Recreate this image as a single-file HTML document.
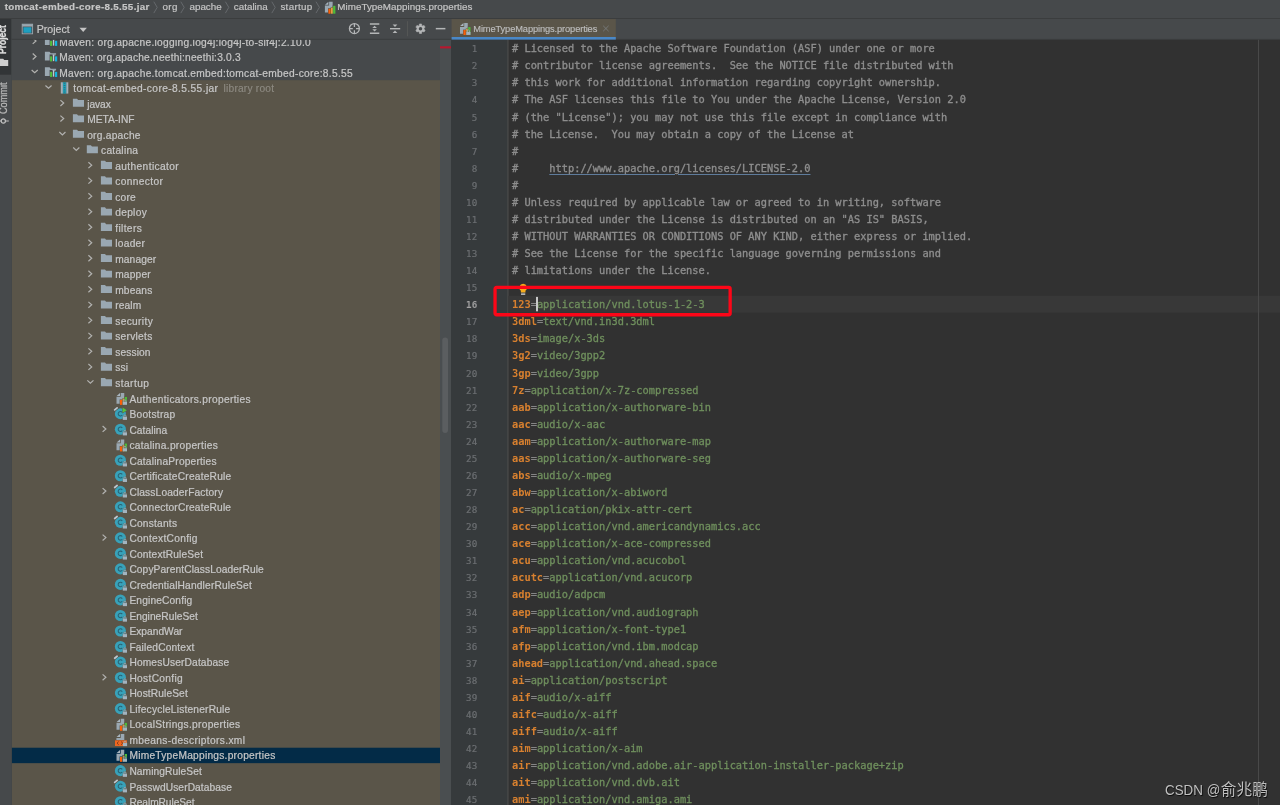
<!DOCTYPE html>
<html lang="en"><head><meta charset="utf-8"><title>MimeTypeMappings.properties</title>
<style>
html,body{margin:0;padding:0;width:1280px;height:805px;overflow:hidden;background:#46494b}
body{position:relative;font-family:"Liberation Sans", sans-serif;color:#bbb}
div,span,svg{position:absolute;white-space:pre}
.t{font-size:10.2px;line-height:15.52px;height:15.52px;color:#c6c6c6;-webkit-text-stroke:0.22px #c6c6c6}
.bc{font-size:9.8px;line-height:18px;top:-1.8px;height:18px;color:#c6c6c6;-webkit-text-stroke:0.18px #c6c6c6}
.ln{font-family:"DejaVu Sans Mono", "Liberation Mono", monospace;font-size:9.2px;line-height:17.07px;height:17.07px;width:26.2px;left:451px;text-align:right;color:#6c6f72;-webkit-text-stroke:0.2px #6c6f72}
.c{font-family:"DejaVu Sans Mono", "Liberation Mono", monospace;font-size:10.33px;line-height:17.07px;height:17.07px;left:512.0px;color:#8e8e8e;letter-spacing:0;-webkit-text-stroke:0.33px #8e8e8e}
.k{position:static;color:#d8802f;font-weight:bold;-webkit-text-stroke:0}
.e{position:static;color:#858585;-webkit-text-stroke:0.2px #858585}
.v{position:static;color:#6f8f5d;-webkit-text-stroke:0.3px #6f8f5d}
.u{position:static;text-decoration:underline;text-decoration-color:#5f7c9c;text-decoration-thickness:0.8px;text-underline-offset:1.6px}
</style></head><body><div id="app" style="left:-6px;top:-6px;width:1292px;height:817px;will-change:transform;filter:blur(0.45px)"><div style="left:6px;top:6px;width:1280px;height:805px">
<svg width="1292" height="817" viewBox="0 0 1292 817" style="left:-6px;top:-6px"><rect x="0" y="0" width="1292" height="817" fill="#46494b"/><rect x="17.6" y="86.2" width="428.4" height="740" fill="#5a5549"/><rect x="17.6" y="753.73" width="428.4" height="15.42" fill="#032b47"/><rect x="446" y="45" width="11" height="780" fill="#4a4e50"/><rect x="448.3" y="343.5" width="5.7" height="95.4" fill="#5b5e60" rx="2.85"/><rect x="446" y="52.3" width="11" height="2.1" fill="#b8172e"/><rect x="457" y="45" width="840" height="780" fill="#313131"/><rect x="457" y="45" width="56.6" height="780" fill="#363a3c"/><rect x="513.5" y="45" width="0.9" height="780" fill="#555"/><rect x="514.4" y="301.815" width="780" height="16.87" fill="#383838"/><rect x="1264.1" y="45" width="0.9" height="780" fill="#4c4c4c"/></svg>
<svg width="10" height="11" viewBox="0 0 10 11" style="left:30px;top:36px;overflow:visible"><g transform="translate(0.50 0.82)"><path d="M2.2 1.2L5.5 4.15 2.2 7.1" fill="none" stroke="#b2b2b0" stroke-width="1.2"/></g></svg><svg width="18" height="18" viewBox="0 0 18 18" style="left:43px;top:33px;overflow:visible"><g transform="translate(0.50 0.32)"><path d="M1.4 2.85H6L7.2 4.5H12.6V11.6H1.4Z" fill="#9aa8b2"/><rect x="6.1" y="5.6" width="8" height="7.4" fill="#46494b"/><path d="M8.9 5.4h3.2v1.2h-3.2z" fill="#9aa8b2" opacity=".8"/><rect x="6.6" y="7.5" width="2.1" height="5.1" fill="#54be3c"/><rect x="9.4" y="5.8" width="1.35" height="6.5" fill="#bccad6"/><rect x="11.5" y="7.5" width="2.2" height="5.1" fill="#12b4dc"/></g></svg><span class="t" style="left:59.20px;top:34.56px;letter-spacing:0.295px">Maven: org.apache.logging.log4j:log4j-to-slf4j:2.10.0</span>
<svg width="10" height="10" viewBox="0 0 10 10" style="left:30px;top:52px;overflow:visible"><g transform="translate(0.50 0.34)"><path d="M2.2 1.2L5.5 4.15 2.2 7.1" fill="none" stroke="#b2b2b0" stroke-width="1.2"/></g></svg><svg width="18" height="18" viewBox="0 0 18 18" style="left:43px;top:48px;overflow:visible"><g transform="translate(0.50 0.84)"><path d="M1.4 2.85H6L7.2 4.5H12.6V11.6H1.4Z" fill="#9aa8b2"/><rect x="6.1" y="5.6" width="8" height="7.4" fill="#46494b"/><path d="M8.9 5.4h3.2v1.2h-3.2z" fill="#9aa8b2" opacity=".8"/><rect x="6.6" y="7.5" width="2.1" height="5.1" fill="#54be3c"/><rect x="9.4" y="5.8" width="1.35" height="6.5" fill="#bccad6"/><rect x="11.5" y="7.5" width="2.2" height="5.1" fill="#12b4dc"/></g></svg><span class="t" style="left:59.20px;top:50.08px;letter-spacing:0.211px">Maven: org.apache.neethi:neethi:3.0.3</span>
<svg width="10" height="10" viewBox="0 0 10 10" style="left:30px;top:67px;overflow:visible"><g transform="translate(0.40 0.56)"><path d="M1.25 2.4L4.3 5.2 7.35 2.4" fill="none" stroke="#b2b2b0" stroke-width="1.2"/></g></svg><svg width="18" height="18" viewBox="0 0 18 18" style="left:43px;top:64px;overflow:visible"><g transform="translate(0.50 0.36)"><path d="M1.4 2.85H6L7.2 4.5H12.6V11.6H1.4Z" fill="#9aa8b2"/><rect x="6.1" y="5.6" width="8" height="7.4" fill="#46494b"/><path d="M8.9 5.4h3.2v1.2h-3.2z" fill="#9aa8b2" opacity=".8"/><rect x="6.6" y="7.5" width="2.1" height="5.1" fill="#54be3c"/><rect x="9.4" y="5.8" width="1.35" height="6.5" fill="#bccad6"/><rect x="11.5" y="7.5" width="2.2" height="5.1" fill="#12b4dc"/></g></svg><span class="t" style="left:59.20px;top:65.60px;letter-spacing:0.307px">Maven: org.apache.tomcat.embed:tomcat-embed-core:8.5.55</span>
<svg width="10" height="10" viewBox="0 0 10 10" style="left:44px;top:83px;overflow:visible"><g transform="translate(0.20 0.08)"><path d="M1.25 2.4L4.3 5.2 7.35 2.4" fill="none" stroke="#b2b2b0" stroke-width="1.2"/></g></svg><svg width="18" height="18" viewBox="0 0 18 18" style="left:57px;top:79px;overflow:visible"><g transform="translate(0.30 0.88)"><rect x="3.5" y="2.4" width="2.1" height="11.3" fill="#a3b0ba"/><rect x="8.9" y="2.4" width="2.1" height="11.3" fill="#a3b0ba"/><rect x="5.6" y="2.4" width="3.3" height="11.3" fill="#21a2b8"/><path d="M6.4 3.4h1.7M6.4 5.6h1.7M6.4 7.8h1.7M6.4 10h1.7M6.4 12.2h1.7" stroke="#2a6c7c" stroke-width="0.9"/></g></svg><span class="t" style="left:73.30px;top:81.12px;letter-spacing:0.389px">tomcat-embed-core-8.5.55.jar</span><span class="t" style="left:223.6px;top:81.12px;color:#8d8a82;-webkit-text-stroke:0.15px #8d8a82;letter-spacing:0.204px">library root</span>
<svg width="10" height="11" viewBox="0 0 10 11" style="left:58px;top:98px;overflow:visible"><g transform="translate(0.20 0.90)"><path d="M2.2 1.2L5.5 4.15 2.2 7.1" fill="none" stroke="#b2b2b0" stroke-width="1.2"/></g></svg><svg width="18" height="18" viewBox="0 0 18 18" style="left:71px;top:95px;overflow:visible"><g transform="translate(0.20 0.40)"><path d="M1.7 3.3H5.8L6.9 4.6H12.8V11.4H1.7Z" fill="#9aa8b2"/></g></svg><span class="t" style="left:87.20px;top:96.64px;letter-spacing:-0.062px">javax</span>
<svg width="10" height="10" viewBox="0 0 10 10" style="left:58px;top:114px;overflow:visible"><g transform="translate(0.20 0.42)"><path d="M2.2 1.2L5.5 4.15 2.2 7.1" fill="none" stroke="#b2b2b0" stroke-width="1.2"/></g></svg><svg width="18" height="18" viewBox="0 0 18 18" style="left:71px;top:110px;overflow:visible"><g transform="translate(0.20 0.92)"><path d="M1.7 3.3H5.8L6.9 4.6H12.8V11.4H1.7Z" fill="#9aa8b2"/></g></svg><span class="t" style="left:87.20px;top:112.16px;letter-spacing:-0.008px">META-INF</span>
<svg width="10" height="10" viewBox="0 0 10 10" style="left:58px;top:129px;overflow:visible"><g transform="translate(0.10 0.64)"><path d="M1.25 2.4L4.3 5.2 7.35 2.4" fill="none" stroke="#b2b2b0" stroke-width="1.2"/></g></svg><svg width="18" height="18" viewBox="0 0 18 18" style="left:71px;top:126px;overflow:visible"><g transform="translate(0.20 0.44)"><path d="M1.7 3.3H5.8L6.9 4.6H12.8V11.4H1.7Z" fill="#9aa8b2"/></g></svg><span class="t" style="left:87.20px;top:127.68px;letter-spacing:0.257px">org.apache</span>
<svg width="10" height="10" viewBox="0 0 10 10" style="left:72px;top:145px;overflow:visible"><g transform="translate(0.00 0.16)"><path d="M1.25 2.4L4.3 5.2 7.35 2.4" fill="none" stroke="#b2b2b0" stroke-width="1.2"/></g></svg><svg width="18" height="18" viewBox="0 0 18 18" style="left:85px;top:141px;overflow:visible"><g transform="translate(0.10 0.96)"><path d="M1.7 3.3H5.8L6.9 4.6H12.8V11.4H1.7Z" fill="#9aa8b2"/></g></svg><span class="t" style="left:101.10px;top:143.20px;letter-spacing:0.254px">catalina</span>
<svg width="10" height="11" viewBox="0 0 10 11" style="left:86px;top:160px;overflow:visible"><g transform="translate(0.20 0.98)"><path d="M2.2 1.2L5.5 4.15 2.2 7.1" fill="none" stroke="#b2b2b0" stroke-width="1.2"/></g></svg><svg width="18" height="18" viewBox="0 0 18 18" style="left:99px;top:157px;overflow:visible"><g transform="translate(0.20 0.48)"><path d="M1.7 3.3H5.8L6.9 4.6H12.8V11.4H1.7Z" fill="#9aa8b2"/></g></svg><span class="t" style="left:115.20px;top:158.72px;letter-spacing:0.387px">authenticator</span>
<svg width="10" height="10" viewBox="0 0 10 10" style="left:86px;top:176px;overflow:visible"><g transform="translate(0.20 0.50)"><path d="M2.2 1.2L5.5 4.15 2.2 7.1" fill="none" stroke="#b2b2b0" stroke-width="1.2"/></g></svg><svg width="18" height="17" viewBox="0 0 18 17" style="left:99px;top:173px;overflow:visible"><g transform="translate(0.20 0.00)"><path d="M1.7 3.3H5.8L6.9 4.6H12.8V11.4H1.7Z" fill="#9aa8b2"/></g></svg><span class="t" style="left:115.20px;top:174.24px;letter-spacing:0.381px">connector</span>
<svg width="10" height="10" viewBox="0 0 10 10" style="left:86px;top:192px;overflow:visible"><g transform="translate(0.20 0.02)"><path d="M2.2 1.2L5.5 4.15 2.2 7.1" fill="none" stroke="#b2b2b0" stroke-width="1.2"/></g></svg><svg width="18" height="18" viewBox="0 0 18 18" style="left:99px;top:188px;overflow:visible"><g transform="translate(0.20 0.52)"><path d="M1.7 3.3H5.8L6.9 4.6H12.8V11.4H1.7Z" fill="#9aa8b2"/></g></svg><span class="t" style="left:115.20px;top:189.76px;letter-spacing:0.241px">core</span>
<svg width="10" height="10" viewBox="0 0 10 10" style="left:86px;top:207px;overflow:visible"><g transform="translate(0.20 0.54)"><path d="M2.2 1.2L5.5 4.15 2.2 7.1" fill="none" stroke="#b2b2b0" stroke-width="1.2"/></g></svg><svg width="18" height="18" viewBox="0 0 18 18" style="left:99px;top:204px;overflow:visible"><g transform="translate(0.20 0.04)"><path d="M1.7 3.3H5.8L6.9 4.6H12.8V11.4H1.7Z" fill="#9aa8b2"/></g></svg><span class="t" style="left:115.20px;top:205.28px;letter-spacing:0.304px">deploy</span>
<svg width="10" height="10" viewBox="0 0 10 10" style="left:86px;top:223px;overflow:visible"><g transform="translate(0.20 0.06)"><path d="M2.2 1.2L5.5 4.15 2.2 7.1" fill="none" stroke="#b2b2b0" stroke-width="1.2"/></g></svg><svg width="18" height="18" viewBox="0 0 18 18" style="left:99px;top:219px;overflow:visible"><g transform="translate(0.20 0.56)"><path d="M1.7 3.3H5.8L6.9 4.6H12.8V11.4H1.7Z" fill="#9aa8b2"/></g></svg><span class="t" style="left:115.20px;top:220.80px;letter-spacing:0.368px">filters</span>
<svg width="10" height="10" viewBox="0 0 10 10" style="left:86px;top:238px;overflow:visible"><g transform="translate(0.20 0.58)"><path d="M2.2 1.2L5.5 4.15 2.2 7.1" fill="none" stroke="#b2b2b0" stroke-width="1.2"/></g></svg><svg width="18" height="18" viewBox="0 0 18 18" style="left:99px;top:235px;overflow:visible"><g transform="translate(0.20 0.08)"><path d="M1.7 3.3H5.8L6.9 4.6H12.8V11.4H1.7Z" fill="#9aa8b2"/></g></svg><span class="t" style="left:115.20px;top:236.32px;letter-spacing:0.294px">loader</span>
<svg width="10" height="10" viewBox="0 0 10 10" style="left:86px;top:254px;overflow:visible"><g transform="translate(0.20 0.10)"><path d="M2.2 1.2L5.5 4.15 2.2 7.1" fill="none" stroke="#b2b2b0" stroke-width="1.2"/></g></svg><svg width="18" height="18" viewBox="0 0 18 18" style="left:99px;top:250px;overflow:visible"><g transform="translate(0.20 0.60)"><path d="M1.7 3.3H5.8L6.9 4.6H12.8V11.4H1.7Z" fill="#9aa8b2"/></g></svg><span class="t" style="left:115.20px;top:251.84px;letter-spacing:0.139px">manager</span>
<svg width="10" height="11" viewBox="0 0 10 11" style="left:86px;top:269px;overflow:visible"><g transform="translate(0.20 0.62)"><path d="M2.2 1.2L5.5 4.15 2.2 7.1" fill="none" stroke="#b2b2b0" stroke-width="1.2"/></g></svg><svg width="18" height="18" viewBox="0 0 18 18" style="left:99px;top:266px;overflow:visible"><g transform="translate(0.20 0.12)"><path d="M1.7 3.3H5.8L6.9 4.6H12.8V11.4H1.7Z" fill="#9aa8b2"/></g></svg><span class="t" style="left:115.20px;top:267.36px;letter-spacing:0.201px">mapper</span>
<svg width="10" height="10" viewBox="0 0 10 10" style="left:86px;top:285px;overflow:visible"><g transform="translate(0.20 0.14)"><path d="M2.2 1.2L5.5 4.15 2.2 7.1" fill="none" stroke="#b2b2b0" stroke-width="1.2"/></g></svg><svg width="18" height="18" viewBox="0 0 18 18" style="left:99px;top:281px;overflow:visible"><g transform="translate(0.20 0.64)"><path d="M1.7 3.3H5.8L6.9 4.6H12.8V11.4H1.7Z" fill="#9aa8b2"/></g></svg><span class="t" style="left:115.20px;top:282.88px;letter-spacing:0.16px">mbeans</span>
<svg width="10" height="11" viewBox="0 0 10 11" style="left:86px;top:300px;overflow:visible"><g transform="translate(0.20 0.66)"><path d="M2.2 1.2L5.5 4.15 2.2 7.1" fill="none" stroke="#b2b2b0" stroke-width="1.2"/></g></svg><svg width="18" height="18" viewBox="0 0 18 18" style="left:99px;top:297px;overflow:visible"><g transform="translate(0.20 0.16)"><path d="M1.7 3.3H5.8L6.9 4.6H12.8V11.4H1.7Z" fill="#9aa8b2"/></g></svg><span class="t" style="left:115.20px;top:298.40px;letter-spacing:0.141px">realm</span>
<svg width="10" height="10" viewBox="0 0 10 10" style="left:86px;top:316px;overflow:visible"><g transform="translate(0.20 0.18)"><path d="M2.2 1.2L5.5 4.15 2.2 7.1" fill="none" stroke="#b2b2b0" stroke-width="1.2"/></g></svg><svg width="18" height="18" viewBox="0 0 18 18" style="left:99px;top:312px;overflow:visible"><g transform="translate(0.20 0.68)"><path d="M1.7 3.3H5.8L6.9 4.6H12.8V11.4H1.7Z" fill="#9aa8b2"/></g></svg><span class="t" style="left:115.20px;top:313.92px;letter-spacing:0.349px">security</span>
<svg width="10" height="11" viewBox="0 0 10 11" style="left:86px;top:331px;overflow:visible"><g transform="translate(0.20 0.70)"><path d="M2.2 1.2L5.5 4.15 2.2 7.1" fill="none" stroke="#b2b2b0" stroke-width="1.2"/></g></svg><svg width="18" height="18" viewBox="0 0 18 18" style="left:99px;top:328px;overflow:visible"><g transform="translate(0.20 0.20)"><path d="M1.7 3.3H5.8L6.9 4.6H12.8V11.4H1.7Z" fill="#9aa8b2"/></g></svg><span class="t" style="left:115.20px;top:329.44px;letter-spacing:0.277px">servlets</span>
<svg width="10" height="10" viewBox="0 0 10 10" style="left:86px;top:347px;overflow:visible"><g transform="translate(0.20 0.22)"><path d="M2.2 1.2L5.5 4.15 2.2 7.1" fill="none" stroke="#b2b2b0" stroke-width="1.2"/></g></svg><svg width="18" height="18" viewBox="0 0 18 18" style="left:99px;top:343px;overflow:visible"><g transform="translate(0.20 0.72)"><path d="M1.7 3.3H5.8L6.9 4.6H12.8V11.4H1.7Z" fill="#9aa8b2"/></g></svg><span class="t" style="left:115.20px;top:344.96px;letter-spacing:0.126px">session</span>
<svg width="10" height="11" viewBox="0 0 10 11" style="left:86px;top:362px;overflow:visible"><g transform="translate(0.20 0.74)"><path d="M2.2 1.2L5.5 4.15 2.2 7.1" fill="none" stroke="#b2b2b0" stroke-width="1.2"/></g></svg><svg width="18" height="18" viewBox="0 0 18 18" style="left:99px;top:359px;overflow:visible"><g transform="translate(0.20 0.24)"><path d="M1.7 3.3H5.8L6.9 4.6H12.8V11.4H1.7Z" fill="#9aa8b2"/></g></svg><span class="t" style="left:115.20px;top:360.48px;letter-spacing:0.173px">ssi</span>
<svg width="10" height="10" viewBox="0 0 10 10" style="left:86px;top:377px;overflow:visible"><g transform="translate(0.10 0.96)"><path d="M1.25 2.4L4.3 5.2 7.35 2.4" fill="none" stroke="#b2b2b0" stroke-width="1.2"/></g></svg><svg width="18" height="18" viewBox="0 0 18 18" style="left:99px;top:374px;overflow:visible"><g transform="translate(0.20 0.76)"><path d="M1.7 3.3H5.8L6.9 4.6H12.8V11.4H1.7Z" fill="#9aa8b2"/></g></svg><span class="t" style="left:115.20px;top:376.00px;letter-spacing:0.441px">startup</span>
<svg width="18" height="18" viewBox="0 0 18 18" style="left:113px;top:390px;overflow:visible"><g transform="translate(0.40 0.28)"><path d="M7.3 2.6H10.85V13.45H3.1V6.5H7.3Z" fill="#9aa8b2"/><path d="M3.2 5.7L6.6 2.7V5.7Z" fill="#a9b6c0"/><rect x="6.2" y="9.2" width="8" height="5.8" fill="#5a5549"/><rect x="8.9" y="8" width="5.1" height="2" fill="#5a5549"/><rect x="10.9" y="6.3" width="3.1" height="2" fill="#5a5549"/><rect x="6.6" y="9.6" width="2.2" height="5" fill="#fb5f07"/><rect x="9.3" y="8.4" width="1.6" height="6.2" fill="#f0b040"/><rect x="11.3" y="6.7" width="2.3" height="7.9" fill="#4fba3a"/><rect x="9.15" y="11.15" width="4.7" height="3.6" fill="#5a5549" opacity=".6"/><path d="M10.4 11.6v-1.0a1.1 1.1 0 0 1 2.2 0v1.0" fill="none" stroke="#5a5549" stroke-width="1.5" opacity=".5"/><rect x="9.4" y="11.4" width="4.2" height="3.1" fill="#a3b3bf"/><path d="M10.4 11.6v-1.0a1.1 1.1 0 0 1 2.2 0v1.0" fill="none" stroke="#a3b3bf" stroke-width="0.75"/></g></svg><span class="t" style="left:129.40px;top:391.52px;letter-spacing:0.326px">Authenticators.properties</span>
<svg width="18" height="18" viewBox="0 0 18 18" style="left:113px;top:405px;overflow:visible"><g transform="translate(0.40 0.80)"><circle cx="7" cy="7.9" r="5.55" fill="#38a2ba"/><path d="M8.85 9.25a2.25 2.25 0 1 1 0-2.7" fill="none" stroke="#2a6273" stroke-width="1.05"/><path d="M8.9 1.1L14 4.45 8.9 7.6Z" fill="#5a5549"/><path d="M9.2 1.7L13.4 4.45 9.2 7Z" fill="#55c43c"/><path d="M1.3 4.1L3.7 2.1" stroke="#5a5549" stroke-width="3" stroke-linecap="round"/><path d="M1.3 4.1L3.7 2.1" stroke="#bcc6cf" stroke-width="1.8" stroke-linecap="round"/><rect x="9.15" y="10.75" width="4.7" height="3.6" fill="#5a5549" opacity=".6"/><path d="M10.4 11.2v-1.0a1.1 1.1 0 0 1 2.2 0v1.0" fill="none" stroke="#5a5549" stroke-width="1.5" opacity=".5"/><rect x="9.4" y="11.0" width="4.2" height="3.1" fill="#a3b3bf"/><path d="M10.4 11.2v-1.0a1.1 1.1 0 0 1 2.2 0v1.0" fill="none" stroke="#a3b3bf" stroke-width="0.75"/></g></svg><span class="t" style="left:129.40px;top:407.04px;letter-spacing:0.28px">Bootstrap</span>
<svg width="10" height="11" viewBox="0 0 10 11" style="left:100px;top:424px;overflow:visible"><g transform="translate(0.40 0.82)"><path d="M2.2 1.2L5.5 4.15 2.2 7.1" fill="none" stroke="#b2b2b0" stroke-width="1.2"/></g></svg><svg width="18" height="18" viewBox="0 0 18 18" style="left:113px;top:421px;overflow:visible"><g transform="translate(0.40 0.32)"><circle cx="7" cy="7.9" r="5.55" fill="#38a2ba"/><path d="M8.85 9.25a2.25 2.25 0 1 1 0-2.7" fill="none" stroke="#2a6273" stroke-width="1.05"/><rect x="9.15" y="10.75" width="4.7" height="3.6" fill="#5a5549" opacity=".6"/><path d="M10.4 11.2v-1.0a1.1 1.1 0 0 1 2.2 0v1.0" fill="none" stroke="#5a5549" stroke-width="1.5" opacity=".5"/><rect x="9.4" y="11.0" width="4.2" height="3.1" fill="#a3b3bf"/><path d="M10.4 11.2v-1.0a1.1 1.1 0 0 1 2.2 0v1.0" fill="none" stroke="#a3b3bf" stroke-width="0.75"/></g></svg><span class="t" style="left:129.40px;top:422.56px;letter-spacing:0.066px">Catalina</span>
<svg width="18" height="18" viewBox="0 0 18 18" style="left:113px;top:436px;overflow:visible"><g transform="translate(0.40 0.84)"><path d="M7.3 2.6H10.85V13.45H3.1V6.5H7.3Z" fill="#9aa8b2"/><path d="M3.2 5.7L6.6 2.7V5.7Z" fill="#a9b6c0"/><rect x="6.2" y="9.2" width="8" height="5.8" fill="#5a5549"/><rect x="8.9" y="8" width="5.1" height="2" fill="#5a5549"/><rect x="10.9" y="6.3" width="3.1" height="2" fill="#5a5549"/><rect x="6.6" y="9.6" width="2.2" height="5" fill="#fb5f07"/><rect x="9.3" y="8.4" width="1.6" height="6.2" fill="#f0b040"/><rect x="11.3" y="6.7" width="2.3" height="7.9" fill="#4fba3a"/><rect x="9.15" y="11.15" width="4.7" height="3.6" fill="#5a5549" opacity=".6"/><path d="M10.4 11.6v-1.0a1.1 1.1 0 0 1 2.2 0v1.0" fill="none" stroke="#5a5549" stroke-width="1.5" opacity=".5"/><rect x="9.4" y="11.4" width="4.2" height="3.1" fill="#a3b3bf"/><path d="M10.4 11.6v-1.0a1.1 1.1 0 0 1 2.2 0v1.0" fill="none" stroke="#a3b3bf" stroke-width="0.75"/></g></svg><span class="t" style="left:129.40px;top:438.08px;letter-spacing:0.283px">catalina.properties</span>
<svg width="18" height="18" viewBox="0 0 18 18" style="left:113px;top:452px;overflow:visible"><g transform="translate(0.40 0.36)"><circle cx="7" cy="7.9" r="5.55" fill="#38a2ba"/><path d="M8.85 9.25a2.25 2.25 0 1 1 0-2.7" fill="none" stroke="#2a6273" stroke-width="1.05"/><rect x="9.15" y="10.75" width="4.7" height="3.6" fill="#5a5549" opacity=".6"/><path d="M10.4 11.2v-1.0a1.1 1.1 0 0 1 2.2 0v1.0" fill="none" stroke="#5a5549" stroke-width="1.5" opacity=".5"/><rect x="9.4" y="11.0" width="4.2" height="3.1" fill="#a3b3bf"/><path d="M10.4 11.2v-1.0a1.1 1.1 0 0 1 2.2 0v1.0" fill="none" stroke="#a3b3bf" stroke-width="0.75"/></g></svg><span class="t" style="left:129.40px;top:453.60px;letter-spacing:0.193px">CatalinaProperties</span>
<svg width="18" height="18" viewBox="0 0 18 18" style="left:113px;top:467px;overflow:visible"><g transform="translate(0.40 0.88)"><circle cx="7" cy="7.9" r="5.55" fill="#38a2ba"/><path d="M8.85 9.25a2.25 2.25 0 1 1 0-2.7" fill="none" stroke="#2a6273" stroke-width="1.05"/><rect x="9.15" y="10.75" width="4.7" height="3.6" fill="#5a5549" opacity=".6"/><path d="M10.4 11.2v-1.0a1.1 1.1 0 0 1 2.2 0v1.0" fill="none" stroke="#5a5549" stroke-width="1.5" opacity=".5"/><rect x="9.4" y="11.0" width="4.2" height="3.1" fill="#a3b3bf"/><path d="M10.4 11.2v-1.0a1.1 1.1 0 0 1 2.2 0v1.0" fill="none" stroke="#a3b3bf" stroke-width="0.75"/></g></svg><span class="t" style="left:129.40px;top:469.12px;letter-spacing:0.223px">CertificateCreateRule</span>
<svg width="10" height="11" viewBox="0 0 10 11" style="left:100px;top:486px;overflow:visible"><g transform="translate(0.40 0.90)"><path d="M2.2 1.2L5.5 4.15 2.2 7.1" fill="none" stroke="#b2b2b0" stroke-width="1.2"/></g></svg><svg width="18" height="18" viewBox="0 0 18 18" style="left:113px;top:483px;overflow:visible"><g transform="translate(0.40 0.40)"><circle cx="7" cy="7.9" r="5.55" fill="#38a2ba"/><path d="M8.85 9.25a2.25 2.25 0 1 1 0-2.7" fill="none" stroke="#2a6273" stroke-width="1.05"/><path d="M1.3 4.1L3.7 2.1" stroke="#5a5549" stroke-width="3" stroke-linecap="round"/><path d="M1.3 4.1L3.7 2.1" stroke="#bcc6cf" stroke-width="1.8" stroke-linecap="round"/><rect x="9.15" y="10.75" width="4.7" height="3.6" fill="#5a5549" opacity=".6"/><path d="M10.4 11.2v-1.0a1.1 1.1 0 0 1 2.2 0v1.0" fill="none" stroke="#5a5549" stroke-width="1.5" opacity=".5"/><rect x="9.4" y="11.0" width="4.2" height="3.1" fill="#a3b3bf"/><path d="M10.4 11.2v-1.0a1.1 1.1 0 0 1 2.2 0v1.0" fill="none" stroke="#a3b3bf" stroke-width="0.75"/></g></svg><span class="t" style="left:129.40px;top:484.64px;letter-spacing:0.143px">ClassLoaderFactory</span>
<svg width="18" height="18" viewBox="0 0 18 18" style="left:113px;top:498px;overflow:visible"><g transform="translate(0.40 0.92)"><circle cx="7" cy="7.9" r="5.55" fill="#38a2ba"/><path d="M8.85 9.25a2.25 2.25 0 1 1 0-2.7" fill="none" stroke="#2a6273" stroke-width="1.05"/><rect x="9.15" y="10.75" width="4.7" height="3.6" fill="#5a5549" opacity=".6"/><path d="M10.4 11.2v-1.0a1.1 1.1 0 0 1 2.2 0v1.0" fill="none" stroke="#5a5549" stroke-width="1.5" opacity=".5"/><rect x="9.4" y="11.0" width="4.2" height="3.1" fill="#a3b3bf"/><path d="M10.4 11.2v-1.0a1.1 1.1 0 0 1 2.2 0v1.0" fill="none" stroke="#a3b3bf" stroke-width="0.75"/></g></svg><span class="t" style="left:129.40px;top:500.16px;letter-spacing:0.17px">ConnectorCreateRule</span>
<svg width="18" height="18" viewBox="0 0 18 18" style="left:113px;top:514px;overflow:visible"><g transform="translate(0.40 0.44)"><circle cx="7" cy="7.9" r="5.55" fill="#38a2ba"/><path d="M8.85 9.25a2.25 2.25 0 1 1 0-2.7" fill="none" stroke="#2a6273" stroke-width="1.05"/><path d="M1.3 4.1L3.7 2.1" stroke="#5a5549" stroke-width="3" stroke-linecap="round"/><path d="M1.3 4.1L3.7 2.1" stroke="#bcc6cf" stroke-width="1.8" stroke-linecap="round"/><rect x="9.15" y="10.75" width="4.7" height="3.6" fill="#5a5549" opacity=".6"/><path d="M10.4 11.2v-1.0a1.1 1.1 0 0 1 2.2 0v1.0" fill="none" stroke="#5a5549" stroke-width="1.5" opacity=".5"/><rect x="9.4" y="11.0" width="4.2" height="3.1" fill="#a3b3bf"/><path d="M10.4 11.2v-1.0a1.1 1.1 0 0 1 2.2 0v1.0" fill="none" stroke="#a3b3bf" stroke-width="0.75"/></g></svg><span class="t" style="left:129.40px;top:515.68px;letter-spacing:0.216px">Constants</span>
<svg width="10" height="10" viewBox="0 0 10 10" style="left:100px;top:533px;overflow:visible"><g transform="translate(0.40 0.46)"><path d="M2.2 1.2L5.5 4.15 2.2 7.1" fill="none" stroke="#b2b2b0" stroke-width="1.2"/></g></svg><svg width="18" height="18" viewBox="0 0 18 18" style="left:113px;top:529px;overflow:visible"><g transform="translate(0.40 0.96)"><circle cx="7" cy="7.9" r="5.55" fill="#38a2ba"/><path d="M8.85 9.25a2.25 2.25 0 1 1 0-2.7" fill="none" stroke="#2a6273" stroke-width="1.05"/><rect x="9.15" y="10.75" width="4.7" height="3.6" fill="#5a5549" opacity=".6"/><path d="M10.4 11.2v-1.0a1.1 1.1 0 0 1 2.2 0v1.0" fill="none" stroke="#5a5549" stroke-width="1.5" opacity=".5"/><rect x="9.4" y="11.0" width="4.2" height="3.1" fill="#a3b3bf"/><path d="M10.4 11.2v-1.0a1.1 1.1 0 0 1 2.2 0v1.0" fill="none" stroke="#a3b3bf" stroke-width="0.75"/></g></svg><span class="t" style="left:129.40px;top:531.20px;letter-spacing:0.295px">ContextConfig</span>
<svg width="18" height="18" viewBox="0 0 18 18" style="left:113px;top:545px;overflow:visible"><g transform="translate(0.40 0.48)"><circle cx="7" cy="7.9" r="5.55" fill="#38a2ba"/><path d="M8.85 9.25a2.25 2.25 0 1 1 0-2.7" fill="none" stroke="#2a6273" stroke-width="1.05"/><rect x="9.15" y="10.75" width="4.7" height="3.6" fill="#5a5549" opacity=".6"/><path d="M10.4 11.2v-1.0a1.1 1.1 0 0 1 2.2 0v1.0" fill="none" stroke="#5a5549" stroke-width="1.5" opacity=".5"/><rect x="9.4" y="11.0" width="4.2" height="3.1" fill="#a3b3bf"/><path d="M10.4 11.2v-1.0a1.1 1.1 0 0 1 2.2 0v1.0" fill="none" stroke="#a3b3bf" stroke-width="0.75"/></g></svg><span class="t" style="left:129.40px;top:546.72px;letter-spacing:0.172px">ContextRuleSet</span>
<svg width="18" height="17" viewBox="0 0 18 17" style="left:113px;top:561px;overflow:visible"><g transform="translate(0.40 0.00)"><circle cx="7" cy="7.9" r="5.55" fill="#38a2ba"/><path d="M8.85 9.25a2.25 2.25 0 1 1 0-2.7" fill="none" stroke="#2a6273" stroke-width="1.05"/><rect x="9.15" y="10.75" width="4.7" height="3.6" fill="#5a5549" opacity=".6"/><path d="M10.4 11.2v-1.0a1.1 1.1 0 0 1 2.2 0v1.0" fill="none" stroke="#5a5549" stroke-width="1.5" opacity=".5"/><rect x="9.4" y="11.0" width="4.2" height="3.1" fill="#a3b3bf"/><path d="M10.4 11.2v-1.0a1.1 1.1 0 0 1 2.2 0v1.0" fill="none" stroke="#a3b3bf" stroke-width="0.75"/></g></svg><span class="t" style="left:129.40px;top:562.24px;letter-spacing:0.1px">CopyParentClassLoaderRule</span>
<svg width="18" height="18" viewBox="0 0 18 18" style="left:113px;top:576px;overflow:visible"><g transform="translate(0.40 0.52)"><circle cx="7" cy="7.9" r="5.55" fill="#38a2ba"/><path d="M8.85 9.25a2.25 2.25 0 1 1 0-2.7" fill="none" stroke="#2a6273" stroke-width="1.05"/><rect x="9.15" y="10.75" width="4.7" height="3.6" fill="#5a5549" opacity=".6"/><path d="M10.4 11.2v-1.0a1.1 1.1 0 0 1 2.2 0v1.0" fill="none" stroke="#5a5549" stroke-width="1.5" opacity=".5"/><rect x="9.4" y="11.0" width="4.2" height="3.1" fill="#a3b3bf"/><path d="M10.4 11.2v-1.0a1.1 1.1 0 0 1 2.2 0v1.0" fill="none" stroke="#a3b3bf" stroke-width="0.75"/></g></svg><span class="t" style="left:129.40px;top:577.76px;letter-spacing:0.174px">CredentialHandlerRuleSet</span>
<svg width="18" height="18" viewBox="0 0 18 18" style="left:113px;top:592px;overflow:visible"><g transform="translate(0.40 0.04)"><circle cx="7" cy="7.9" r="5.55" fill="#38a2ba"/><path d="M8.85 9.25a2.25 2.25 0 1 1 0-2.7" fill="none" stroke="#2a6273" stroke-width="1.05"/><rect x="9.15" y="10.75" width="4.7" height="3.6" fill="#5a5549" opacity=".6"/><path d="M10.4 11.2v-1.0a1.1 1.1 0 0 1 2.2 0v1.0" fill="none" stroke="#5a5549" stroke-width="1.5" opacity=".5"/><rect x="9.4" y="11.0" width="4.2" height="3.1" fill="#a3b3bf"/><path d="M10.4 11.2v-1.0a1.1 1.1 0 0 1 2.2 0v1.0" fill="none" stroke="#a3b3bf" stroke-width="0.75"/></g></svg><span class="t" style="left:129.40px;top:593.28px;letter-spacing:0.153px">EngineConfig</span>
<svg width="18" height="18" viewBox="0 0 18 18" style="left:113px;top:607px;overflow:visible"><g transform="translate(0.40 0.56)"><circle cx="7" cy="7.9" r="5.55" fill="#38a2ba"/><path d="M8.85 9.25a2.25 2.25 0 1 1 0-2.7" fill="none" stroke="#2a6273" stroke-width="1.05"/><rect x="9.15" y="10.75" width="4.7" height="3.6" fill="#5a5549" opacity=".6"/><path d="M10.4 11.2v-1.0a1.1 1.1 0 0 1 2.2 0v1.0" fill="none" stroke="#5a5549" stroke-width="1.5" opacity=".5"/><rect x="9.4" y="11.0" width="4.2" height="3.1" fill="#a3b3bf"/><path d="M10.4 11.2v-1.0a1.1 1.1 0 0 1 2.2 0v1.0" fill="none" stroke="#a3b3bf" stroke-width="0.75"/></g></svg><span class="t" style="left:129.40px;top:608.80px;letter-spacing:0.032px">EngineRuleSet</span>
<svg width="18" height="18" viewBox="0 0 18 18" style="left:113px;top:623px;overflow:visible"><g transform="translate(0.40 0.08)"><circle cx="7" cy="7.9" r="5.55" fill="#38a2ba"/><path d="M8.85 9.25a2.25 2.25 0 1 1 0-2.7" fill="none" stroke="#2a6273" stroke-width="1.05"/><rect x="9.15" y="10.75" width="4.7" height="3.6" fill="#5a5549" opacity=".6"/><path d="M10.4 11.2v-1.0a1.1 1.1 0 0 1 2.2 0v1.0" fill="none" stroke="#5a5549" stroke-width="1.5" opacity=".5"/><rect x="9.4" y="11.0" width="4.2" height="3.1" fill="#a3b3bf"/><path d="M10.4 11.2v-1.0a1.1 1.1 0 0 1 2.2 0v1.0" fill="none" stroke="#a3b3bf" stroke-width="0.75"/></g></svg><span class="t" style="left:129.40px;top:624.32px;letter-spacing:0.03px">ExpandWar</span>
<svg width="18" height="18" viewBox="0 0 18 18" style="left:113px;top:638px;overflow:visible"><g transform="translate(0.40 0.60)"><circle cx="7" cy="7.9" r="5.55" fill="#38a2ba"/><path d="M8.85 9.25a2.25 2.25 0 1 1 0-2.7" fill="none" stroke="#2a6273" stroke-width="1.05"/><rect x="9.15" y="10.75" width="4.7" height="3.6" fill="#5a5549" opacity=".6"/><path d="M10.4 11.2v-1.0a1.1 1.1 0 0 1 2.2 0v1.0" fill="none" stroke="#5a5549" stroke-width="1.5" opacity=".5"/><rect x="9.4" y="11.0" width="4.2" height="3.1" fill="#a3b3bf"/><path d="M10.4 11.2v-1.0a1.1 1.1 0 0 1 2.2 0v1.0" fill="none" stroke="#a3b3bf" stroke-width="0.75"/></g></svg><span class="t" style="left:129.40px;top:639.84px;letter-spacing:0.166px">FailedContext</span>
<svg width="18" height="18" viewBox="0 0 18 18" style="left:113px;top:654px;overflow:visible"><g transform="translate(0.40 0.12)"><circle cx="7" cy="7.9" r="5.55" fill="#38a2ba"/><path d="M8.85 9.25a2.25 2.25 0 1 1 0-2.7" fill="none" stroke="#2a6273" stroke-width="1.05"/><path d="M1.3 4.1L3.7 2.1" stroke="#5a5549" stroke-width="3" stroke-linecap="round"/><path d="M1.3 4.1L3.7 2.1" stroke="#bcc6cf" stroke-width="1.8" stroke-linecap="round"/><rect x="9.15" y="10.75" width="4.7" height="3.6" fill="#5a5549" opacity=".6"/><path d="M10.4 11.2v-1.0a1.1 1.1 0 0 1 2.2 0v1.0" fill="none" stroke="#5a5549" stroke-width="1.5" opacity=".5"/><rect x="9.4" y="11.0" width="4.2" height="3.1" fill="#a3b3bf"/><path d="M10.4 11.2v-1.0a1.1 1.1 0 0 1 2.2 0v1.0" fill="none" stroke="#a3b3bf" stroke-width="0.75"/></g></svg><span class="t" style="left:129.40px;top:655.36px;letter-spacing:0.154px">HomesUserDatabase</span>
<svg width="10" height="10" viewBox="0 0 10 10" style="left:100px;top:673px;overflow:visible"><g transform="translate(0.40 0.14)"><path d="M2.2 1.2L5.5 4.15 2.2 7.1" fill="none" stroke="#b2b2b0" stroke-width="1.2"/></g></svg><svg width="18" height="18" viewBox="0 0 18 18" style="left:113px;top:669px;overflow:visible"><g transform="translate(0.40 0.64)"><circle cx="7" cy="7.9" r="5.55" fill="#38a2ba"/><path d="M8.85 9.25a2.25 2.25 0 1 1 0-2.7" fill="none" stroke="#2a6273" stroke-width="1.05"/><rect x="9.15" y="10.75" width="4.7" height="3.6" fill="#5a5549" opacity=".6"/><path d="M10.4 11.2v-1.0a1.1 1.1 0 0 1 2.2 0v1.0" fill="none" stroke="#5a5549" stroke-width="1.5" opacity=".5"/><rect x="9.4" y="11.0" width="4.2" height="3.1" fill="#a3b3bf"/><path d="M10.4 11.2v-1.0a1.1 1.1 0 0 1 2.2 0v1.0" fill="none" stroke="#a3b3bf" stroke-width="0.75"/></g></svg><span class="t" style="left:129.40px;top:670.88px;letter-spacing:0.327px">HostConfig</span>
<svg width="18" height="18" viewBox="0 0 18 18" style="left:113px;top:685px;overflow:visible"><g transform="translate(0.40 0.16)"><circle cx="7" cy="7.9" r="5.55" fill="#38a2ba"/><path d="M8.85 9.25a2.25 2.25 0 1 1 0-2.7" fill="none" stroke="#2a6273" stroke-width="1.05"/><rect x="9.15" y="10.75" width="4.7" height="3.6" fill="#5a5549" opacity=".6"/><path d="M10.4 11.2v-1.0a1.1 1.1 0 0 1 2.2 0v1.0" fill="none" stroke="#5a5549" stroke-width="1.5" opacity=".5"/><rect x="9.4" y="11.0" width="4.2" height="3.1" fill="#a3b3bf"/><path d="M10.4 11.2v-1.0a1.1 1.1 0 0 1 2.2 0v1.0" fill="none" stroke="#a3b3bf" stroke-width="0.75"/></g></svg><span class="t" style="left:129.40px;top:686.40px;letter-spacing:0.115px">HostRuleSet</span>
<svg width="18" height="18" viewBox="0 0 18 18" style="left:113px;top:700px;overflow:visible"><g transform="translate(0.40 0.68)"><circle cx="7" cy="7.9" r="5.55" fill="#38a2ba"/><path d="M8.85 9.25a2.25 2.25 0 1 1 0-2.7" fill="none" stroke="#2a6273" stroke-width="1.05"/><rect x="9.15" y="10.75" width="4.7" height="3.6" fill="#5a5549" opacity=".6"/><path d="M10.4 11.2v-1.0a1.1 1.1 0 0 1 2.2 0v1.0" fill="none" stroke="#5a5549" stroke-width="1.5" opacity=".5"/><rect x="9.4" y="11.0" width="4.2" height="3.1" fill="#a3b3bf"/><path d="M10.4 11.2v-1.0a1.1 1.1 0 0 1 2.2 0v1.0" fill="none" stroke="#a3b3bf" stroke-width="0.75"/></g></svg><span class="t" style="left:129.40px;top:701.92px;letter-spacing:0.2px">LifecycleListenerRule</span>
<svg width="18" height="18" viewBox="0 0 18 18" style="left:113px;top:716px;overflow:visible"><g transform="translate(0.40 0.20)"><path d="M7.3 2.6H10.85V13.45H3.1V6.5H7.3Z" fill="#9aa8b2"/><path d="M3.2 5.7L6.6 2.7V5.7Z" fill="#a9b6c0"/><rect x="6.2" y="9.2" width="8" height="5.8" fill="#5a5549"/><rect x="8.9" y="8" width="5.1" height="2" fill="#5a5549"/><rect x="10.9" y="6.3" width="3.1" height="2" fill="#5a5549"/><rect x="6.6" y="9.6" width="2.2" height="5" fill="#fb5f07"/><rect x="9.3" y="8.4" width="1.6" height="6.2" fill="#f0b040"/><rect x="11.3" y="6.7" width="2.3" height="7.9" fill="#4fba3a"/><rect x="9.15" y="11.15" width="4.7" height="3.6" fill="#5a5549" opacity=".6"/><path d="M10.4 11.6v-1.0a1.1 1.1 0 0 1 2.2 0v1.0" fill="none" stroke="#5a5549" stroke-width="1.5" opacity=".5"/><rect x="9.4" y="11.4" width="4.2" height="3.1" fill="#a3b3bf"/><path d="M10.4 11.6v-1.0a1.1 1.1 0 0 1 2.2 0v1.0" fill="none" stroke="#a3b3bf" stroke-width="0.75"/></g></svg><span class="t" style="left:129.40px;top:717.44px;letter-spacing:0.291px">LocalStrings.properties</span>
<svg width="18" height="18" viewBox="0 0 18 18" style="left:113px;top:731px;overflow:visible"><g transform="translate(0.40 0.72)"><path d="M7.3 2.3H10.9V8.3H3V6.2H7.3Z" fill="#9aa8b2"/><path d="M3.1 5.4L6.6 2.4V5.4Z" fill="#a9b6c0"/><rect x="1.6" y="8.6" width="12" height="5.7" fill="#f0661f"/><path d="M5.3 9.9L3.6 11.45 5.3 13M7.7 9.9L9.4 11.45 7.7 13" fill="none" stroke="#6b3a1c" stroke-width="0.9"/><rect x="9.25" y="11.05" width="4.7" height="3.6" fill="none" opacity=".6"/><path d="M10.5 11.5v-1.0a1.1 1.1 0 0 1 2.2 0v1.0" fill="none" stroke="#c9702f" stroke-width="1.5" opacity=".5"/><rect x="9.5" y="11.3" width="4.2" height="3.1" fill="#a3b3bf"/><path d="M10.5 11.5v-1.0a1.1 1.1 0 0 1 2.2 0v1.0" fill="none" stroke="#a3b3bf" stroke-width="0.75"/></g></svg><span class="t" style="left:129.40px;top:732.96px;letter-spacing:0.355px">mbeans-descriptors.xml</span>
<svg width="18" height="18" viewBox="0 0 18 18" style="left:113px;top:747px;overflow:visible"><g transform="translate(0.40 0.24)"><path d="M7.3 2.6H10.85V13.45H3.1V6.5H7.3Z" fill="#9aa8b2"/><path d="M3.2 5.7L6.6 2.7V5.7Z" fill="#a9b6c0"/><rect x="6.2" y="9.2" width="8" height="5.8" fill="#032b47"/><rect x="8.9" y="8" width="5.1" height="2" fill="#032b47"/><rect x="10.9" y="6.3" width="3.1" height="2" fill="#032b47"/><rect x="6.6" y="9.6" width="2.2" height="5" fill="#fb5f07"/><rect x="9.3" y="8.4" width="1.6" height="6.2" fill="#f0b040"/><rect x="11.3" y="6.7" width="2.3" height="7.9" fill="#4fba3a"/><rect x="9.15" y="11.15" width="4.7" height="3.6" fill="#032b47" opacity=".6"/><path d="M10.4 11.6v-1.0a1.1 1.1 0 0 1 2.2 0v1.0" fill="none" stroke="#032b47" stroke-width="1.5" opacity=".5"/><rect x="9.4" y="11.4" width="4.2" height="3.1" fill="#a3b3bf"/><path d="M10.4 11.6v-1.0a1.1 1.1 0 0 1 2.2 0v1.0" fill="none" stroke="#a3b3bf" stroke-width="0.75"/></g></svg><span class="t" style="left:129.40px;top:748.48px;letter-spacing:0.252px">MimeTypeMappings.properties</span>
<svg width="18" height="18" viewBox="0 0 18 18" style="left:113px;top:762px;overflow:visible"><g transform="translate(0.40 0.76)"><circle cx="7" cy="7.9" r="5.55" fill="#38a2ba"/><path d="M8.85 9.25a2.25 2.25 0 1 1 0-2.7" fill="none" stroke="#2a6273" stroke-width="1.05"/><rect x="9.15" y="10.75" width="4.7" height="3.6" fill="#5a5549" opacity=".6"/><path d="M10.4 11.2v-1.0a1.1 1.1 0 0 1 2.2 0v1.0" fill="none" stroke="#5a5549" stroke-width="1.5" opacity=".5"/><rect x="9.4" y="11.0" width="4.2" height="3.1" fill="#a3b3bf"/><path d="M10.4 11.2v-1.0a1.1 1.1 0 0 1 2.2 0v1.0" fill="none" stroke="#a3b3bf" stroke-width="0.75"/></g></svg><span class="t" style="left:129.40px;top:764.00px;letter-spacing:0.083px">NamingRuleSet</span>
<svg width="18" height="18" viewBox="0 0 18 18" style="left:113px;top:778px;overflow:visible"><g transform="translate(0.40 0.28)"><circle cx="7" cy="7.9" r="5.55" fill="#38a2ba"/><path d="M8.85 9.25a2.25 2.25 0 1 1 0-2.7" fill="none" stroke="#2a6273" stroke-width="1.05"/><path d="M1.3 4.1L3.7 2.1" stroke="#5a5549" stroke-width="3" stroke-linecap="round"/><path d="M1.3 4.1L3.7 2.1" stroke="#bcc6cf" stroke-width="1.8" stroke-linecap="round"/><rect x="9.15" y="10.75" width="4.7" height="3.6" fill="#5a5549" opacity=".6"/><path d="M10.4 11.2v-1.0a1.1 1.1 0 0 1 2.2 0v1.0" fill="none" stroke="#5a5549" stroke-width="1.5" opacity=".5"/><rect x="9.4" y="11.0" width="4.2" height="3.1" fill="#a3b3bf"/><path d="M10.4 11.2v-1.0a1.1 1.1 0 0 1 2.2 0v1.0" fill="none" stroke="#a3b3bf" stroke-width="0.75"/></g></svg><span class="t" style="left:129.40px;top:779.52px;letter-spacing:0.106px">PasswdUserDatabase</span>
<svg width="18" height="18" viewBox="0 0 18 18" style="left:113px;top:793px;overflow:visible"><g transform="translate(0.40 0.80)"><circle cx="7" cy="7.9" r="5.55" fill="#38a2ba"/><path d="M8.85 9.25a2.25 2.25 0 1 1 0-2.7" fill="none" stroke="#2a6273" stroke-width="1.05"/><rect x="9.15" y="10.75" width="4.7" height="3.6" fill="#5a5549" opacity=".6"/><path d="M10.4 11.2v-1.0a1.1 1.1 0 0 1 2.2 0v1.0" fill="none" stroke="#5a5549" stroke-width="1.5" opacity=".5"/><rect x="9.4" y="11.0" width="4.2" height="3.1" fill="#a3b3bf"/><path d="M10.4 11.2v-1.0a1.1 1.1 0 0 1 2.2 0v1.0" fill="none" stroke="#a3b3bf" stroke-width="0.75"/></g></svg><span class="t" style="left:129.40px;top:795.04px;letter-spacing:-0.053px">RealmRuleSet</span>
<span class="ln" style="top:40.22px">1</span><span class="c" style="top:40.22px"># Licensed to the Apache Software Foundation (ASF) under one or more</span>
<span class="ln" style="top:57.28px">2</span><span class="c" style="top:57.28px"># contributor license agreements.  See the NOTICE file distributed with</span>
<span class="ln" style="top:74.36px">3</span><span class="c" style="top:74.36px"># this work for additional information regarding copyright ownership.</span>
<span class="ln" style="top:91.43px">4</span><span class="c" style="top:91.43px"># The ASF licenses this file to You under the Apache License, Version 2.0</span>
<span class="ln" style="top:108.50px">5</span><span class="c" style="top:108.50px"># (the &quot;License&quot;); you may not use this file except in compliance with</span>
<span class="ln" style="top:125.56px">6</span><span class="c" style="top:125.56px"># the License.  You may obtain a copy of the License at</span>
<span class="ln" style="top:142.64px">7</span><span class="c" style="top:142.64px">#</span>
<span class="ln" style="top:159.71px">8</span><span class="c" style="top:159.71px">#     <span class="u">http://www.apache.org/licenses/LICENSE-2.0</span></span>
<span class="ln" style="top:176.78px">9</span><span class="c" style="top:176.78px">#</span>
<span class="ln" style="top:193.84px">10</span><span class="c" style="top:193.84px"># Unless required by applicable law or agreed to in writing, software</span>
<span class="ln" style="top:210.91px">11</span><span class="c" style="top:210.91px"># distributed under the License is distributed on an &quot;AS IS&quot; BASIS,</span>
<span class="ln" style="top:227.99px">12</span><span class="c" style="top:227.99px"># WITHOUT WARRANTIES OR CONDITIONS OF ANY KIND, either express or implied.</span>
<span class="ln" style="top:245.06px">13</span><span class="c" style="top:245.06px"># See the License for the specific language governing permissions and</span>
<span class="ln" style="top:262.12px">14</span><span class="c" style="top:262.12px"># limitations under the License.</span>
<span class="ln" style="top:279.19px">15</span>
<span class="ln" style="top:296.26px;color:#a4a3a3;font-weight:bold">16</span><span class="c" style="top:296.26px"><span class="k">123</span><span class="e">=</span><span class="v">application/vnd.lotus-1-2-3</span></span>
<span class="ln" style="top:313.33px">17</span><span class="c" style="top:313.33px"><span class="k">3dml</span><span class="e">=</span><span class="v">text/vnd.in3d.3dml</span></span>
<span class="ln" style="top:330.40px">18</span><span class="c" style="top:330.40px"><span class="k">3ds</span><span class="e">=</span><span class="v">image/x-3ds</span></span>
<span class="ln" style="top:347.47px">19</span><span class="c" style="top:347.47px"><span class="k">3g2</span><span class="e">=</span><span class="v">video/3gpp2</span></span>
<span class="ln" style="top:364.54px">20</span><span class="c" style="top:364.54px"><span class="k">3gp</span><span class="e">=</span><span class="v">video/3gpp</span></span>
<span class="ln" style="top:381.61px">21</span><span class="c" style="top:381.61px"><span class="k">7z</span><span class="e">=</span><span class="v">application/x-7z-compressed</span></span>
<span class="ln" style="top:398.69px">22</span><span class="c" style="top:398.69px"><span class="k">aab</span><span class="e">=</span><span class="v">application/x-authorware-bin</span></span>
<span class="ln" style="top:415.75px">23</span><span class="c" style="top:415.75px"><span class="k">aac</span><span class="e">=</span><span class="v">audio/x-aac</span></span>
<span class="ln" style="top:432.82px">24</span><span class="c" style="top:432.82px"><span class="k">aam</span><span class="e">=</span><span class="v">application/x-authorware-map</span></span>
<span class="ln" style="top:449.89px">25</span><span class="c" style="top:449.89px"><span class="k">aas</span><span class="e">=</span><span class="v">application/x-authorware-seg</span></span>
<span class="ln" style="top:466.96px">26</span><span class="c" style="top:466.96px"><span class="k">abs</span><span class="e">=</span><span class="v">audio/x-mpeg</span></span>
<span class="ln" style="top:484.03px">27</span><span class="c" style="top:484.03px"><span class="k">abw</span><span class="e">=</span><span class="v">application/x-abiword</span></span>
<span class="ln" style="top:501.10px">28</span><span class="c" style="top:501.10px"><span class="k">ac</span><span class="e">=</span><span class="v">application/pkix-attr-cert</span></span>
<span class="ln" style="top:518.18px">29</span><span class="c" style="top:518.18px"><span class="k">acc</span><span class="e">=</span><span class="v">application/vnd.americandynamics.acc</span></span>
<span class="ln" style="top:535.25px">30</span><span class="c" style="top:535.25px"><span class="k">ace</span><span class="e">=</span><span class="v">application/x-ace-compressed</span></span>
<span class="ln" style="top:552.32px">31</span><span class="c" style="top:552.32px"><span class="k">acu</span><span class="e">=</span><span class="v">application/vnd.acucobol</span></span>
<span class="ln" style="top:569.38px">32</span><span class="c" style="top:569.38px"><span class="k">acutc</span><span class="e">=</span><span class="v">application/vnd.acucorp</span></span>
<span class="ln" style="top:586.46px">33</span><span class="c" style="top:586.46px"><span class="k">adp</span><span class="e">=</span><span class="v">audio/adpcm</span></span>
<span class="ln" style="top:603.53px">34</span><span class="c" style="top:603.53px"><span class="k">aep</span><span class="e">=</span><span class="v">application/vnd.audiograph</span></span>
<span class="ln" style="top:620.60px">35</span><span class="c" style="top:620.60px"><span class="k">afm</span><span class="e">=</span><span class="v">application/x-font-type1</span></span>
<span class="ln" style="top:637.67px">36</span><span class="c" style="top:637.67px"><span class="k">afp</span><span class="e">=</span><span class="v">application/vnd.ibm.modcap</span></span>
<span class="ln" style="top:654.74px">37</span><span class="c" style="top:654.74px"><span class="k">ahead</span><span class="e">=</span><span class="v">application/vnd.ahead.space</span></span>
<span class="ln" style="top:671.81px">38</span><span class="c" style="top:671.81px"><span class="k">ai</span><span class="e">=</span><span class="v">application/postscript</span></span>
<span class="ln" style="top:688.88px">39</span><span class="c" style="top:688.88px"><span class="k">aif</span><span class="e">=</span><span class="v">audio/x-aiff</span></span>
<span class="ln" style="top:705.95px">40</span><span class="c" style="top:705.95px"><span class="k">aifc</span><span class="e">=</span><span class="v">audio/x-aiff</span></span>
<span class="ln" style="top:723.01px">41</span><span class="c" style="top:723.01px"><span class="k">aiff</span><span class="e">=</span><span class="v">audio/x-aiff</span></span>
<span class="ln" style="top:740.09px">42</span><span class="c" style="top:740.09px"><span class="k">aim</span><span class="e">=</span><span class="v">application/x-aim</span></span>
<span class="ln" style="top:757.16px">43</span><span class="c" style="top:757.16px"><span class="k">air</span><span class="e">=</span><span class="v">application/vnd.adobe.air-application-installer-package+zip</span></span>
<span class="ln" style="top:774.23px">44</span><span class="c" style="top:774.23px"><span class="k">ait</span><span class="e">=</span><span class="v">application/vnd.dvb.ait</span></span>
<span class="ln" style="top:791.30px">45</span><span class="c" style="top:791.30px"><span class="k">ami</span><span class="e">=</span><span class="v">application/vnd.amiga.ami</span></span>
<svg width="1292" height="817" viewBox="0 0 1292 817" style="left:-6px;top:-6px"><rect x="0" y="0" width="1292" height="45.6" fill="#46494b"/><rect x="0" y="24" width="1292" height="0.9" fill="#3a3d3e"/><rect x="0" y="25" width="17.6" height="800" fill="#46494b"/><rect x="0" y="25" width="17.3" height="55.7" fill="#323537"/><rect x="17.2" y="25" width="0.5" height="800" fill="#414446"/><rect x="17.6" y="44.8" width="439.4" height="0.9" fill="#393c3d"/><rect x="457" y="44.9" width="840" height="0.8" fill="#393c3d"/><rect x="457.6" y="25.1" width="164.2" height="18" fill="#5a5549"/><rect x="457.6" y="43" width="164.2" height="2.6" fill="#4a88c7"/><rect x="413.1" y="27.2" width="0.8" height="15" fill="#595a58"/><rect x="441.8" y="33.9" width="9.6" height="1.5" fill="#b4b6b7"/></svg>
<span class="bc" style="left:4.7px;font-weight:700;letter-spacing:0.314px">tomcat-embed-core-8.5.55.jar</span><span class="bc" style="left:162.5px;font-weight:400;letter-spacing:0.364px">org</span><span class="bc" style="left:189.5px;font-weight:400;letter-spacing:-0.011px">apache</span><span class="bc" style="left:233.8px;font-weight:400;letter-spacing:0.017px">catalina</span><span class="bc" style="left:280.4px;font-weight:400;letter-spacing:0.324px">startup</span><span class="bc" style="left:337.3px;font-weight:400;letter-spacing:0.044px">MimeTypeMappings.properties</span><svg width="18" height="18" viewBox="0 0 18 18" style="left:321px;top:-1px;overflow:visible"><g transform="translate(0.80 0.10)"><path d="M7.3 2.6H10.85V13.45H3.1V6.5H7.3Z" fill="#9aa8b2"/><path d="M3.2 5.7L6.6 2.7V5.7Z" fill="#a9b6c0"/><rect x="6.2" y="9.2" width="8" height="5.8" fill="#46494b"/><rect x="8.9" y="8" width="5.1" height="2" fill="#46494b"/><rect x="10.9" y="6.3" width="3.1" height="2" fill="#46494b"/><rect x="6.6" y="9.6" width="2.2" height="5" fill="#fb5f07"/><rect x="9.3" y="8.4" width="1.6" height="6.2" fill="#f0b040"/><rect x="11.3" y="6.7" width="2.3" height="7.9" fill="#4fba3a"/></g></svg>
<svg width="7" height="15" viewBox="0 0 7 15" style="left:153px;top:0px;overflow:visible"><g transform="translate(0.20 0.90)"><path d="M0.6 0.8L4 6.5 0.6 12.2" fill="none" stroke="#6c7073" stroke-width="0.8"/></g></svg><svg width="7" height="15" viewBox="0 0 7 15" style="left:180px;top:0px;overflow:visible"><g transform="translate(0.20 0.90)"><path d="M0.6 0.8L4 6.5 0.6 12.2" fill="none" stroke="#6c7073" stroke-width="0.8"/></g></svg><svg width="7" height="15" viewBox="0 0 7 15" style="left:224px;top:0px;overflow:visible"><g transform="translate(0.80 0.90)"><path d="M0.6 0.8L4 6.5 0.6 12.2" fill="none" stroke="#6c7073" stroke-width="0.8"/></g></svg><svg width="7" height="15" viewBox="0 0 7 15" style="left:271px;top:0px;overflow:visible"><g transform="translate(0.20 0.90)"><path d="M0.6 0.8L4 6.5 0.6 12.2" fill="none" stroke="#6c7073" stroke-width="0.8"/></g></svg><svg width="7" height="15" viewBox="0 0 7 15" style="left:315px;top:0px;overflow:visible"><g transform="translate(0.40 0.90)"><path d="M0.6 0.8L4 6.5 0.6 12.2" fill="none" stroke="#6c7073" stroke-width="0.8"/></g></svg>
<span style="left:-3.6px;top:54.3px;font-size:11px;font-weight:bold;line-height:13px;height:13px;color:#dedede;-webkit-text-stroke:0.3px #dedede;transform-origin:0 0;transform:rotate(-90deg) scaleX(0.775)">Project</span><span style="left:-3.4px;top:113.8px;font-size:11px;line-height:13px;height:13px;color:#b6b6b6;-webkit-text-stroke:0.3px #b6b6b6;transform-origin:0 0;transform:rotate(-90deg) scaleX(0.83)">Commit</span>
<svg width="10" height="10" viewBox="0 0 10 10" style="left:0px;top:58px;overflow:visible"><g transform="translate(0.00 0.70)"><path d="M0 0h3.2l1 1.2h4v6.2H0z" fill="#cfcfcf"/></g></svg><svg width="10" height="9" viewBox="0 0 10 9" style="left:0px;top:117px;overflow:visible"><g transform="translate(0.00 0.50)"><circle cx="3.3" cy="3.5" r="2.1" fill="none" stroke="#c2c2c2" stroke-width="1.2"/><path d="M0 3.5h1.2M5.4 3.5H8.8" stroke="#c2c2c2" stroke-width="1.2"/></g></svg>
<svg width="13" height="13" viewBox="0 0 13 13" style="left:21px;top:23px;overflow:visible"><g transform="translate(0.80 0.80)"><rect x="0.4" y="0.4" width="10.4" height="9.6" fill="#46494b" stroke="#9aa7b0" stroke-width="0.9"/><rect x="0.4" y="0.4" width="10.4" height="2.4" fill="#9aa7b0"/><rect x="1.6" y="3.4" width="8" height="5.6" fill="#1e9fc0"/></g></svg><span style="left:36.7px;top:21.2px;font-size:10.6px;line-height:16px;height:16px;color:#c6c6c6;-webkit-text-stroke:0.22px #c6c6c6;letter-spacing:0.003px">Project</span><svg width="9" height="7" viewBox="0 0 9 7" style="left:79px;top:27px;overflow:visible"><g transform="translate(0.50 0.80)"><path d="M0 0h7.4L3.7 4.2z" fill="#c4c4c4"/></g></svg><svg width="14" height="14" viewBox="0 0 14 14" style="left:348px;top:22px;overflow:visible"><g transform="translate(0.40 0.60)"><circle cx="6" cy="6" r="5" fill="none" stroke="#b4b6b7" stroke-width="1.25"/><path d="M6 1v3.4M6 7.6V11M1 6h3.4M7.6 6H11" stroke="#b4b6b7" stroke-width="1.25"/></g></svg><svg width="13" height="14" viewBox="0 0 13 14" style="left:369px;top:22px;overflow:visible"><g transform="translate(0.10 0.60)"><path d="M0.8 1.4h9.4M0.8 10.7h9.4" stroke="#b4b6b7" stroke-width="1.5"/><path d="M5.5 3.2L7.8 5.5H3.2zM5.5 9L7.8 6.6H3.2z" fill="#b4b6b7"/></g></svg><svg width="13" height="14" viewBox="0 0 13 14" style="left:389px;top:22px;overflow:visible"><g transform="translate(0.60 0.60)"><path d="M0.4 6.1h10.2" stroke="#b4b6b7" stroke-width="1.4"/><path d="M5.4 4.5L7.8 1.8H3zM5.4 7.8L7.8 10.5H3z" fill="#b4b6b7"/></g></svg><svg width="12" height="13" viewBox="0 0 12 13" style="left:415px;top:23px;overflow:visible"><g transform="translate(0.00 0.20)"><path d="M4.28 2.22L4.44 0.77L6.56 0.77L6.72 2.22L7.73 2.80L9.07 2.22L10.13 4.05L8.95 4.92L8.95 6.08L10.13 6.95L9.07 8.78L7.73 8.20L6.72 8.78L6.56 10.23L4.44 10.23L4.28 8.78L3.27 8.20L1.93 8.78L0.87 6.95L2.05 6.08L2.05 4.92L0.87 4.05L1.93 2.22L3.27 2.80Z" fill="#b4b6b7" stroke="#b4b6b7" stroke-width="0.6" stroke-linejoin="round"/><circle cx="5.5" cy="5.5" r="1.75" fill="#46494b"/></g></svg>
<svg width="18" height="18" viewBox="0 0 18 18" style="left:456px;top:20px;overflow:visible"><g transform="translate(0.90 0.40)"><path d="M7.3 2.6H10.85V13.45H3.1V6.5H7.3Z" fill="#9aa8b2"/><path d="M3.2 5.7L6.6 2.7V5.7Z" fill="#a9b6c0"/><rect x="6.2" y="9.2" width="8" height="5.8" fill="#5a5549"/><rect x="8.9" y="8" width="5.1" height="2" fill="#5a5549"/><rect x="10.9" y="6.3" width="3.1" height="2" fill="#5a5549"/><rect x="6.6" y="9.6" width="2.2" height="5" fill="#fb5f07"/><rect x="9.3" y="8.4" width="1.6" height="6.2" fill="#f0b040"/><rect x="11.3" y="6.7" width="2.3" height="7.9" fill="#4fba3a"/><rect x="9.15" y="11.15" width="4.7" height="3.6" fill="#5a5549" opacity=".6"/><path d="M10.4 11.6v-1.0a1.1 1.1 0 0 1 2.2 0v1.0" fill="none" stroke="#5a5549" stroke-width="1.5" opacity=".5"/><rect x="9.4" y="11.4" width="4.2" height="3.1" fill="#a3b3bf"/><path d="M10.4 11.6v-1.0a1.1 1.1 0 0 1 2.2 0v1.0" fill="none" stroke="#a3b3bf" stroke-width="0.75"/></g></svg><span style="left:473.3px;top:21.2px;font-size:9.3px;line-height:17px;height:17px;color:#bdbdbd;-webkit-text-stroke:0.15px #bdbdbd;letter-spacing:-0.12px">MimeTypeMappings.properties</span><svg width="9" height="8" viewBox="0 0 9 8" style="left:602px;top:25px;overflow:visible"><g transform="translate(0.40 0.00)"><path d="M0.8 0.8l5.4 5.4M6.2 0.8L0.8 6.2" stroke="#777a7c" stroke-width="0.9"/></g></svg>
<svg width="3" height="17" viewBox="0 0 3 17" style="left:536px;top:296px;overflow:visible"><g transform="translate(0.00 0.90)"><rect x="0" y="0" width="2" height="14.4" fill="#c8c8c8"/></g></svg><svg width="10" height="14" viewBox="0 0 10 14" style="left:519px;top:283px;overflow:visible"><g transform="translate(0.15 0.60)"><path d="M4 0.2a3.85 3.85 0 0 1 2.3 6.95v1.75H1.7V7.15A3.85 3.85 0 0 1 4 0.2z" fill="#f5ab1c"/><rect x="1.9" y="9.2" width="4.2" height="0.9" fill="#aaaaaa"/><rect x="1.9" y="10.3" width="4.2" height="1" fill="#c4c4c4"/></g></svg><svg width="240" height="33" viewBox="0 0 240 33" style="left:493px;top:285px;overflow:visible"><g transform="translate(0.40 0.60)"><rect x="1.65" y="1.85" width="235.1" height="27.3" rx="1.5" fill="none" stroke="#fd0618" stroke-width="3.3"/></g></svg>
<span style="left:1164.8px;top:780.3px;font-family:&quot;Liberation Sans&quot;,&quot;Noto Sans CJK SC&quot;,sans-serif;font-size:14.8px;transform-origin:0 50%;transform:scaleX(0.905);line-height:20px;height:20px;color:#c0c0c0;text-shadow:0.8px 0.8px 0.8px rgba(0,0,0,.8)">CSDN @</span><span style="left:1220.8px;top:780.4px;font-family:&quot;Liberation Sans&quot;,&quot;Noto Sans CJK SC&quot;,sans-serif;font-size:15.7px;line-height:20px;height:20px;color:#c0c0c0;text-shadow:0.8px 0.8px 0.8px rgba(0,0,0,.8)">俞兆鹏</span>
</div></div></body></html>
